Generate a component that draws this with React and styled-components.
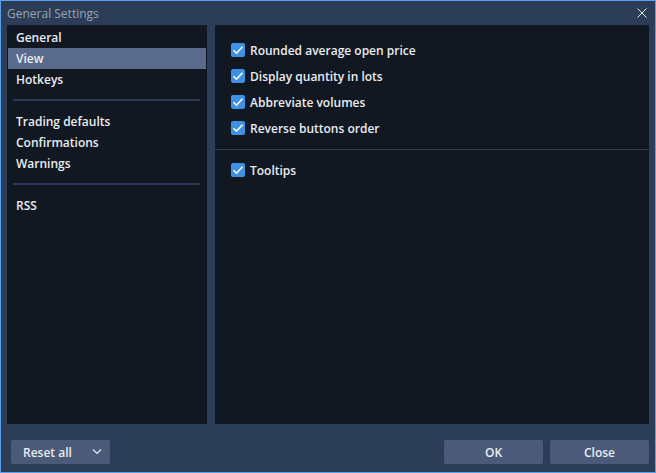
import React, { useState } from 'react';
import styled, { createGlobalStyle } from 'styled-components';

const GlobalStyle = createGlobalStyle`
  html, body {
    margin: 0;
    padding: 0;
    background: #2c3d57;
  }
  * { box-sizing: border-box; }
`;

const Window = styled.div`
  width: 656px;
  height: 473px;
  display: flex;
  flex-direction: column;
  background: #2c3d57;
  border: 1px solid #5c9fe6;
  font-family: "Open Sans", "DejaVu Sans", sans-serif;
  font-size: 12px;
  font-weight: 600;
  color: #e9ecf0;
`;

const TitleBar = styled.div`
  height: 24px;
  display: flex;
  align-items: center;
  justify-content: space-between;
  padding: 0 6px 0 6px;
`;

const Title = styled.div`
  color: #98a3b3;
  font-weight: 400;
  font-size: 12px;
`;

const CloseIcon = styled.button`
  width: 14px;
  height: 14px;
  padding: 0;
  border: none;
  background: none;
  display: flex;
  align-items: center;
  justify-content: center;
  cursor: pointer;
`;

const Body = styled.div`
  flex: 1;
  display: flex;
  gap: 8px;
  padding: 0 6px 0 6px;
  min-height: 0;
`;

const Sidebar = styled.div`
  width: 200px;
  background: #111822;
  padding: 2px 1px;
  display: flex;
  flex-direction: column;
`;

const NavItem = styled.div`
  height: 21px;
  display: flex;
  align-items: center;
  padding-left: 8px;
  background: ${(p) => (p.$active ? '#5a6a8d' : 'transparent')};
  cursor: pointer;
`;

const NavDivider = styled.div`
  height: 2px;
  margin: 9px 6px 10px 5px;
  background: #2a3a52;
`;

const Content = styled.div`
  flex: 1;
  background: #111822;
  display: flex;
  flex-direction: column;
`;

const Group = styled.div`
  display: flex;
  flex-direction: column;
  padding: ${(p) => (p.$tight ? '7px 16px' : '12px 16px 8px')};
`;

const OptionRow = styled.label`
  height: 26px;
  display: flex;
  align-items: center;
  gap: 5px;
  cursor: pointer;
`;

const Box = styled.span`
  width: 14px;
  height: 14px;
  border-radius: 2px;
  background: ${(p) => (p.$checked ? '#3f92e3' : 'transparent')};
  border: ${(p) => (p.$checked ? 'none' : '1px solid #5a6a8d')};
  display: flex;
  align-items: center;
  justify-content: center;
`;

const Divider = styled.div`
  height: 1px;
  background: #2e3b50;
`;

const Footer = styled.div`
  height: 48px;
  display: flex;
  align-items: flex-start;
  justify-content: space-between;
  padding: 16px 6px 0 10px;
`;

const Button = styled.button`
  height: 24px;
  width: ${(p) => p.$width || 99}px;
  border: none;
  border-radius: 2px;
  background: #4b5a78;
  color: #e9ecf0;
  font-family: inherit;
  font-size: 12px;
  font-weight: 600;
  display: flex;
  align-items: center;
  justify-content: ${(p) => (p.$split ? 'space-between' : 'center')};
  padding: ${(p) => (p.$split ? '0 8px 0 12px' : '0')};
  cursor: pointer;
`;

const RightButtons = styled.div`
  display: flex;
  gap: 7px;
`;

const Check = () => (
  <svg width="12" height="10" viewBox="0 0 12 10">
    <path d="M1.5 5.2 L4.5 8.2 L10.5 1.8" fill="none" stroke="#fff" strokeWidth="1.6" />
  </svg>
);

const Option = ({ label, checked, onToggle }) => (
  <OptionRow onClick={onToggle}>
    <Box $checked={checked}>{checked && <Check />}</Box>
    {label}
  </OptionRow>
);

export default function App() {
  const [opts, setOpts] = useState({
    rounded: true,
    lots: true,
    abbr: true,
    reverse: true,
    tooltips: true,
  });
  const toggle = (k) => setOpts((o) => ({ ...o, [k]: !o[k] }));

  return (
    <>
      <GlobalStyle />
      <Window>
        <TitleBar>
          <Title>General Settings</Title>
          <CloseIcon>
            <svg width="10" height="10" viewBox="0 0 10 10">
              <path d="M0.5 0.5 L9.5 9.5 M9.5 0.5 L0.5 9.5" stroke="#e6e9ee" strokeWidth="1" />
            </svg>
          </CloseIcon>
        </TitleBar>
        <Body>
          <Sidebar>
            <NavItem>General</NavItem>
            <NavItem $active>View</NavItem>
            <NavItem>Hotkeys</NavItem>
            <NavDivider />
            <NavItem>Trading defaults</NavItem>
            <NavItem>Confirmations</NavItem>
            <NavItem>Warnings</NavItem>
            <NavDivider />
            <NavItem>RSS</NavItem>
          </Sidebar>
          <Content>
            <Group>
              <Option label="Rounded average open price" checked={opts.rounded} onToggle={() => toggle('rounded')} />
              <Option label="Display quantity in lots" checked={opts.lots} onToggle={() => toggle('lots')} />
              <Option label="Abbreviate volumes" checked={opts.abbr} onToggle={() => toggle('abbr')} />
              <Option label="Reverse buttons order" checked={opts.reverse} onToggle={() => toggle('reverse')} />
            </Group>
            <Divider />
            <Group $tight>
              <Option label="Tooltips" checked={opts.tooltips} onToggle={() => toggle('tooltips')} />
            </Group>
          </Content>
        </Body>
        <Footer>
          <Button $split $width={99}>
            Reset all
            <svg width="10" height="6" viewBox="0 0 10 6">
              <path d="M1 0.5 L5 4.5 L9 0.5" fill="none" stroke="#e6e9ee" strokeWidth="1.2" />
            </svg>
          </Button>
          <RightButtons>
            <Button>OK</Button>
            <Button>Close</Button>
          </RightButtons>
        </Footer>
      </Window>
    </>
  );
}
